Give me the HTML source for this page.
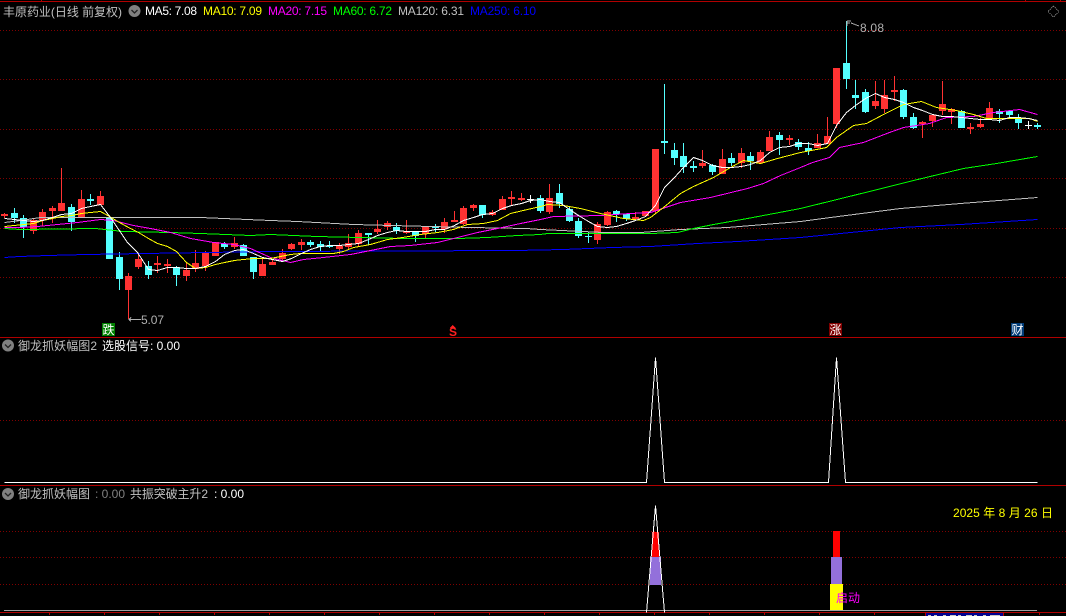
<!DOCTYPE html>
<html><head><meta charset="utf-8">
<style>
html,body{margin:0;padding:0;background:#000;width:1066px;height:616px;overflow:hidden}
svg{display:block}
text{font-family:"WenQuanYi Zen Hei","Liberation Sans","Noto Sans CJK SC",sans-serif;font-size:12px}
.l{font-family:"Liberation Sans","WenQuanYi Zen Hei",sans-serif}
polyline{fill:none;stroke-width:1}
</style></head><body>
<svg width="1066" height="616" viewBox="0 0 1066 616" xmlns="http://www.w3.org/2000/svg">
<rect width="1066" height="616" fill="#000"/>
<g shape-rendering="crispEdges">
<path d="M0 1.5H1066M0 337.5H1066M0 485.5H1066M0 612.5H1066" stroke="#b00000" fill="none"/>
<path d="M41 0h1v1h-1zM1025 0h1v1h-1zM1060 0h1v1h-1zM49 613h1v2h-1zM104 613h1v2h-1zM159 613h1v2h-1zM214 613h1v2h-1zM269 613h1v2h-1zM324 613h1v2h-1zM379 613h1v2h-1zM434 613h1v2h-1zM489 613h1v2h-1zM544 613h1v2h-1zM599 613h1v2h-1zM654 613h1v2h-1zM709 613h1v2h-1zM764 613h1v2h-1zM819 613h1v2h-1zM874 613h1v2h-1zM1039 613h1v2h-1z" fill="#b00000"/>
<path d="M0 30.5H1066M0 79.5H1066M0 129.5H1066M0 178.5H1066M0 228.5H1066M0 277.5H1066M0 420.5H1066M0 531.5H1066M0 557.5H1066M0 584.5H1066" stroke="#800000" stroke-dasharray="1 2" fill="none"/>

<!-- red candles -->
<path fill="#ff3232" d="M4 213h1V218h-1zM1 214h7V216h-7zM33 218h1V234h-1zM30 220h7V231h-7zM42 209h1V226h-1zM39 212h7V220h-7zM52 206h1V223h-1zM49 208h7V211h-7zM61 168h1V211h-1zM58 203h7V211h-7zM81 190h1V218h-1zM78 199h7V218h-7zM100 191h1V205h-1zM97 196h7V205h-7zM128 273h1V319h-1zM125 276h7V290h-7zM138 254h1V269h-1zM135 259h7V267h-7zM157 256h1V273h-1zM154 263h7V265h-7zM167 259h1V273h-1zM164 264h7V266h-7zM186 263h1V281h-1zM183 270h7V276h-7zM195 250h1V272h-1zM192 263h7V269h-7zM205 251h1V271h-1zM202 253h7V266h-7zM212 242h7V256h-7zM234 237h1V249h-1zM231 243h7V247h-7zM262 259h1V276h-1zM259 264h7V276h-7zM272 260h1V265h-1zM269 262h7V265h-7zM282 249h1V260h-1zM279 253h7V259h-7zM291 243h1V250h-1zM288 244h7V249h-7zM301 239h1V250h-1zM298 242h7V245h-7zM339 243h1V254h-1zM336 246h7V249h-7zM348 234h1V250h-1zM345 243h7V247h-7zM358 230h1V246h-1zM355 233h7V244h-7zM377 220h1V234h-1zM374 229h7V232h-7zM387 221h1V230h-1zM384 223h7V227h-7zM406 220h1V234h-1zM403 231h7V233h-7zM425 226h1V238h-1zM422 227h7V234h-7zM444 218h1V233h-1zM441 222h7V229h-7zM454 211h1V222h-1zM451 220h7V222h-7zM463 206h1V225h-1zM460 208h7V224h-7zM473 204h1V211h-1zM470 205h7V208h-7zM492 210h1V216h-1zM489 212h7V215h-7zM502 196h1V210h-1zM499 199h7V210h-7zM511 191h1V205h-1zM508 197h7V199h-7zM521 193h1V201h-1zM518 198h7V200h-7zM549 184h1V214h-1zM546 198h7V212h-7zM597 222h1V244h-1zM594 224h7V240h-7zM607 211h1V226h-1zM604 212h7V225h-7zM635 212h1V220h-1zM632 217h7V219h-7zM645 211h1V217h-1zM642 211h7V216h-7zM655 149h1V213h-1zM652 149h7V211h-7zM702 150h1V168h-1zM699 163h7V166h-7zM722 149h1V174h-1zM719 159h7V174h-7zM741 148h1V168h-1zM738 153h7V163h-7zM760 150h1V164h-1zM757 152h7V163h-7zM769 131h1V151h-1zM766 137h7V151h-7zM789 135h1V145h-1zM786 138h7V140h-7zM817 134h1V148h-1zM814 143h7V148h-7zM827 117h1V144h-1zM824 136h7V144h-7zM836 68h1V128h-1zM833 68h7V124h-7zM875 81h1V109h-1zM872 101h7V106h-7zM884 80h1V113h-1zM881 95h7V109h-7zM894 76h1V101h-1zM891 90h7V92h-7zM922 121h1V138h-1zM919 122h7V124h-7zM932 114h1V127h-1zM929 115h7V121h-7zM942 81h1V115h-1zM939 104h7V111h-7zM951 108h1V124h-1zM948 109h7V112h-7zM970 123h1V134h-1zM967 127h7V129h-7zM980 118h1V128h-1zM977 124h7V127h-7zM989 102h1V119h-1zM986 108h7V118h-7z"/>
<!-- cyan candles -->
<path fill="#54ffff" d="M14 208h1V223h-1zM11 213h7V218h-7zM23 215h1V238h-1zM20 218h7V227h-7zM71 204h1V231h-1zM68 207h7V222h-7zM90 194h1V205h-1zM87 199h7V201h-7zM106 218h7V259h-7zM119 252h1V290h-1zM116 257h7V279h-7zM148 261h1V279h-1zM145 266h7V275h-7zM176 266h1V286h-1zM173 267h7V275h-7zM224 242h1V249h-1zM221 244h7V247h-7zM243 244h1V256h-1zM240 245h7V256h-7zM253 257h1V279h-1zM250 257h7V272h-7zM310 240h1V247h-1zM307 242h7V245h-7zM320 241h1V252h-1zM317 244h7V247h-7zM329 241h1V248h-1zM326 246h7V247h-7zM368 233h1V245h-1zM365 233h7V235h-7zM396 223h1V234h-1zM393 227h7V231h-7zM415 232h1V242h-1zM412 232h7V236h-7zM435 224h1V232h-1zM432 227h7V228h-7zM482 205h1V218h-1zM479 205h7V215h-7zM540 195h1V213h-1zM537 198h7V211h-7zM559 184h1V208h-1zM556 193h7V204h-7zM569 206h1V222h-1zM566 209h7V221h-7zM578 218h1V238h-1zM575 221h7V236h-7zM588 232h1V243h-1zM585 236h7V237h-7zM616 210h1V222h-1zM613 211h7V214h-7zM626 214h1V221h-1zM623 214h7V219h-7zM664 84h1V154h-1zM661 141h7V143h-7zM674 143h1V165h-1zM671 150h7V158h-7zM683 143h1V173h-1zM680 156h7V167h-7zM693 161h1V172h-1zM690 166h7V168h-7zM712 164h1V175h-1zM709 165h7V172h-7zM731 153h1V166h-1zM728 158h7V163h-7zM750 152h1V170h-1zM747 156h7V161h-7zM779 132h1V155h-1zM776 135h7V140h-7zM798 139h1V150h-1zM795 142h7V147h-7zM808 142h1V155h-1zM805 148h7V151h-7zM846 21h1V89h-1zM843 63h7V79h-7zM855 80h1V109h-1zM852 95h7V98h-7zM865 89h1V113h-1zM862 92h7V112h-7zM903 89h1V119h-1zM900 90h7V117h-7zM913 113h1V129h-1zM910 117h7V128h-7zM961 110h1V128h-1zM958 111h7V128h-7zM999 109h1V123h-1zM996 111h7V114h-7zM1009 111h1V118h-1zM1006 111h7V115h-7zM1018 114h1V129h-1zM1015 118h7V123h-7zM1037 123h1V129h-1zM1034 125h7V127h-7z"/>
<path fill="#fff" d="M530 195h1V203h-1zM527 199h7V200h-7zM1028 121h1V129h-1zM1025 125h7V126h-7z"/>

<g transform="translate(.5 .5)">
<!-- MA250 blue -->
<polyline stroke="#0000ff" points="4,257 19,256 47,255 86,254 143,253 270,251 515,250 563,249 612,247 650,246 697,243 737,241 800,237 840,233 900,227 960,224 1037,219"/>
<!-- MA120 silver -->
<polyline stroke="#c0c0c0" points="4,222 20,220 40,217 200,217 270,220 297,221 353,224 430,226 470,227 526,228 540,229 603,232 640,232 680,229 727,227 800,221 830,217 900,208 960,203 1037,197"/>
<!-- MA60 green -->
<polyline stroke="#00ff00" points="4,228 20,229 95,228 123,231 170,232 200,233 250,235 270,234 316,236 403,238 457,238 487,237 517,235 540,234 547,233 650,233 677,232 693,228 713,224 747,218 800,208 873,190 913,180 963,168 996,163 1037,156"/>
<!-- MA20 magenta -->
<polyline stroke="#ff00ff" points="4,227 20,227 37,226 57,224 77,222 100,219 113,220 133,225 150,228 170,232 190,238 213,242 233,244 250,248 270,257 290,262 303,259 323,257 350,254 370,250 390,246 410,245 437,242 457,237 477,232 497,228 520,223 540,219 553,216 600,215 630,213 650,212 680,202 710,197 747,188 763,183 780,175 800,167 812,162 829,157 839,147 863,142 889,132 903,127 929,123 946,117 973,116 993,112 1019,109 1037,114"/>
<!-- MA10 yellow -->
<polyline stroke="#ffff00" points="4,226 33,223 42,220 52,218 61,216 71,215 81,213 90,212 100,211 109,216 119,222 128,227 138,232 148,238 157,243 167,246 176,251 186,262 195,268 205,267 215,264 224,262 234,260 243,259 253,258 270,258 280,256 290,254 300,253 333,253 343,251 353,247 370,244 387,239 402,237 420,234 437,232 453,229 467,224 483,223 497,220 510,213 527,209 540,206 547,204 563,205 580,208 600,213 623,218 643,220 650,217 663,207 680,193 693,186 713,177 730,167 743,160 760,163 777,158 800,152 816,149 826,147 836,137 853,125 866,123 883,114 903,104 921,101 936,107 956,110 973,114 986,118 1003,118 1029,118 1037,121"/>
<!-- MA5 white -->
<polyline stroke="#ffffff" points="4,218 33,221 42,220 52,217 61,214 71,213 81,208 90,206 100,204 110,217 127,242 137,252 148,269 157,270 167,267 176,267 186,268 195,268 205,266 215,261 224,254 234,250 243,249 253,253 262,257 272,259 282,261 291,258 301,253 310,249 320,246 329,245 339,245 348,244 358,243 368,239 377,235 387,232 396,230 406,231 425,231 435,229 444,229 454,225 463,220 473,217 482,214 492,213 502,208 511,205 521,203 530,200 540,199 549,201 559,202 569,209 578,215 588,221 597,226 607,227 616,226 626,223 635,220 645,216 655,205 664,187 674,177 683,167 693,157 702,160 712,165 722,167 731,167 741,166 750,164 760,160 769,152 779,147 789,146 798,143 808,143 817,145 827,143 836,125 846,112 855,105 865,98 875,93 884,97 894,99 903,102 913,107 922,110 932,114 942,116 951,116 961,117 970,118 980,119 989,119 999,120 1009,117 1018,117 1028,118 1037,120"/>

<!-- pane 2 -->
<polyline stroke="#ffffff" points="4,482 646,482 655,357 664,482 828,482 836,357 845,482 1037,482"/>
</g>

<!-- pane 3 -->
<path fill="#ff0000" d="M652 532h7v25h-7zM833 531h7v26h-7z"/>
<path fill="#9370db" d="M650 557h11v28h-11zM831 557h11v27h-11z"/>
<path fill="#ffff00" d="M830 584h13v27h-13z"/>
<path d="M4 610.5H1037" stroke="#a0a0a0" fill="none"/>
<g transform="translate(.5 .5)"><polyline stroke="#ffffff" points="646,612 655,505 664,612"/></g>

<!-- bottom blue box -->
<rect x="925" y="613" width="78" height="3" fill="#000090"/>
<path d="M925 613h1v3h-1zM1003 613h1v3h-1z" fill="#b00000"/>
<path fill="#c8c8c8" d="M928 615h3v1h-3zM934 615h3v1h-3zM943 615h3v1h-3zM950 615h6v1h-6zM958 615h3v1h-3zM966 615h6v1h-6zM974 615h3v1h-3zM983 615h3v1h-3zM990 615h10v1h-10z"/>

<!-- signal boxes -->
<rect x="102" y="323" width="13" height="13" fill="#008000"/>
<rect x="829" y="323" width="13" height="13" fill="#800000"/>
<rect x="1011" y="323" width="13" height="13" fill="#003c78"/>
<path d="M452.500 325l3 3h-6z" fill="#ff2020"/>

<!-- flags -->
<path d="M129 319.500H141M131 317.500l-2 2 2 2" stroke="#b0b0b0" fill="none"/>
<path d="M847 21h4M847 21v5M847 23h3M851 23l8 3" stroke="#b0b0b0" fill="none"/>

<!-- diamond -->
<path d="M1053.500 6L1059 11.500L1053.500 17L1048 11.500Z" fill="none" stroke="#808080" stroke-dasharray="1 1"/>
</g>

<!-- icons -->
<g>
<circle cx="134.500" cy="11" r="6" fill="#808080"/><path d="M131.500 10l3 3 3-3" stroke="#222" stroke-width="1.300" fill="none"/>
<circle cx="8" cy="345.500" r="6" fill="#808080"/><path d="M5 344.500l3 3 3-3" stroke="#222" stroke-width="1.300" fill="none"/>
<circle cx="8" cy="494" r="6" fill="#808080"/><path d="M5 493l3 3 3-3" stroke="#222" stroke-width="1.300" fill="none"/>
</g>

<!-- header text -->
<text x="3" y="16" fill="#c0c0c0" textLength="119" lengthAdjust="spacing">丰原药业(日线 前复权)</text>
<text class="l" x="145" y="15" fill="#ffffff" textLength="52" lengthAdjust="spacing">MA5: 7.08</text>
<text class="l" x="203" y="15" fill="#ffff00" textLength="59" lengthAdjust="spacing">MA10: 7.09</text>
<text class="l" x="268" y="15" fill="#ff00ff" textLength="59" lengthAdjust="spacing">MA20: 7.15</text>
<text class="l" x="333" y="15" fill="#00ff00" textLength="59" lengthAdjust="spacing">MA60: 6.72</text>
<text class="l" x="398" y="15" fill="#c0c0c0" textLength="66" lengthAdjust="spacing">MA120: 6.31</text>
<text class="l" x="470" y="15" fill="#0000ff" textLength="66" lengthAdjust="spacing">MA250: 6.10</text>

<text x="18" y="350" fill="#c0c0c0" textLength="79" lengthAdjust="spacing">御龙抓妖幅图2</text>
<text x="102" y="350" fill="#ffffff" textLength="48" lengthAdjust="spacing">选股信号</text>
<text class="l" x="150" y="350" fill="#ffffff" textLength="30" lengthAdjust="spacing">: 0.00</text>

<text x="18" y="498" fill="#c0c0c0">御龙抓妖幅图</text>
<text class="l" x="95" y="498" fill="#808080" textLength="30" lengthAdjust="spacing">: 0.00</text>
<text x="130" y="498" fill="#c0c0c0" textLength="78" lengthAdjust="spacing">共振突破主升2</text>
<text class="l" x="214" y="498" fill="#ffffff" textLength="30" lengthAdjust="spacing">: 0.00</text>

<text class="l" x="141" y="324" fill="#b0b0b0" textLength="23" lengthAdjust="spacing">5.07</text>
<text class="l" x="860" y="32" fill="#b0b0b0" textLength="24" lengthAdjust="spacing">8.08</text>

<text x="102.500" y="334" fill="#ffffff">跌</text>
<text x="829.500" y="334" fill="#ffffff">涨</text>
<text x="1011.500" y="334" fill="#ffffff">财</text>
<text class="l" x="449" y="336" fill="#ff2020" style="font-size:12px;font-weight:bold">S</text>

<text x="953" y="517" fill="#ffff00" textLength="100" lengthAdjust="spacing">2025 年 8 月 26 日</text>
<text x="836" y="602" fill="#ff00ff">启动</text>
</svg>
</body></html>
